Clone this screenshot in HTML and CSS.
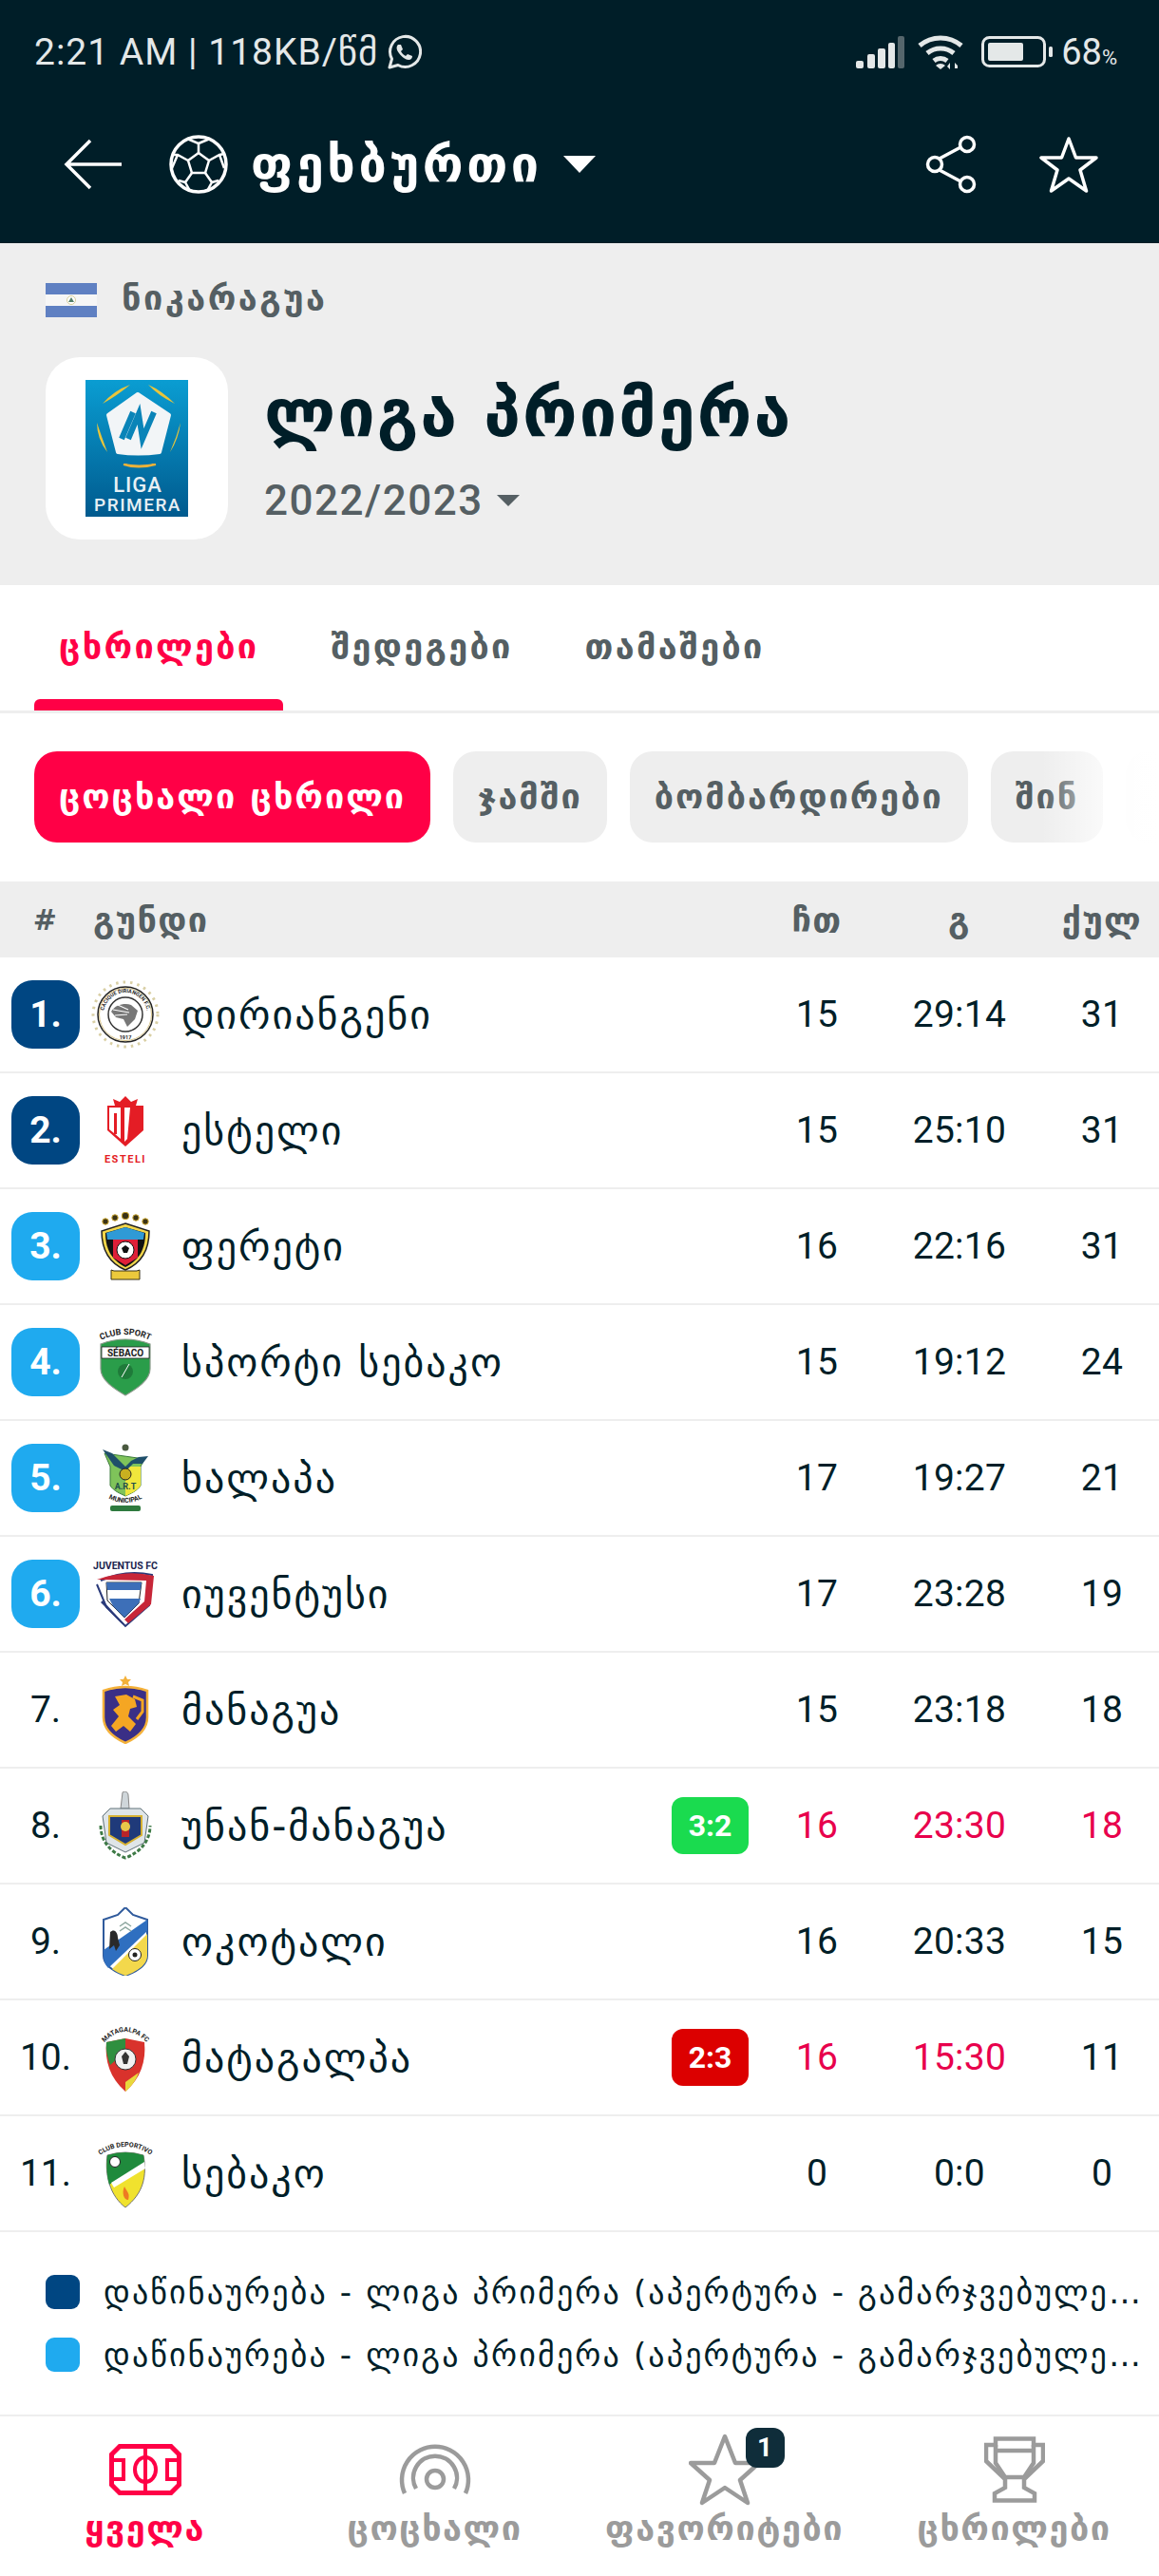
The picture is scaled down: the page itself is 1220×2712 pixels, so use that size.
FILE: index.html
```html
<!DOCTYPE html>
<html lang="ka">
<head>
<meta charset="utf-8">
<title>ლიგა პრიმერა</title>
<link rel="stylesheet" href="styles.css">
</head>
<body>
<div class="page">
  <header class="top">
    <div class="status">
      <div class="status-left">
        <span>2:21 AM | 118KB/წმ</span>
        <svg class="wa" viewBox="0 0 38 38" width="38" height="38"><path d="M4 35l2.500-9A16 16 0 1 1 13 32.500z" fill="none" stroke="#e4e8e8" stroke-width="3" stroke-linejoin="round"/><path d="M13 11c-2 2-2 5 1 9s7 7 10 7c3 0 4-2 4-4l-5-2-2 2c-2-1-4-3-5-5l2-2-2-5z" fill="#e4e8e8"/></svg>
      </div>
      <div class="status-right">
        <svg class="sig" viewBox="0 0 52 36" width="52" height="36"><rect x="0" y="27" width="8" height="8" rx="2" fill="#e4e8e8"/><rect x="12" y="20" width="8" height="15" rx="2" fill="#e4e8e8"/><rect x="23" y="14" width="8" height="21" rx="2" fill="#e4e8e8"/><rect x="34" y="8" width="7" height="27" rx="2" fill="#e4e8e8"/><rect x="44" y="1" width="7" height="34" rx="2" fill="#55666c"/></svg>
        <svg class="wifi" viewBox="0 0 54 40" width="54" height="40"><path d="M3 13a34 34 0 0 1 44 0M11 21a22 22 0 0 1 28 0M18 29a11 11 0 0 1 14 0" fill="none" stroke="#e4e8e8" stroke-width="5"/><path d="M25 38l-5-4a7 7 0 0 1 10 0z" fill="#e4e8e8"/><path d="M35 38v-7l-3 4zM40 40v-9l3 3v3h-3z" fill="#e4e8e8"/></svg>
        <svg class="batt" viewBox="0 0 76 34" width="76" height="34"><rect x="1.500" y="1.500" width="65" height="30" rx="7" fill="none" stroke="#e4e8e8" stroke-width="3"/><rect x="7" y="7" width="37" height="19" rx="2" fill="#e4e8e8"/><rect x="71" y="11" width="4" height="11" rx="1.500" fill="#e4e8e8"/></svg>
        <span class="pct">68<small>%</small></span>
      </div>
    </div>
    <div class="appbar">
      <svg class="back" viewBox="0 0 64 56" width="64" height="56"><path d="M62 28H4M29 3L4 28l25 25" fill="none" stroke="#fff" stroke-width="3.500"/></svg>
      <svg class="ball" viewBox="0 0 62 62" width="62" height="62"><circle cx="31" cy="31" r="29" fill="none" stroke="#fff" stroke-width="3.500"/><path d="M31 19l11 8-4 13H24l-4-13z" fill="none" stroke="#fff" stroke-width="2.500"/><path d="M31 19V9L19 4M31 9l12-5M42 27l11-6 5-1M53 21l5 14M38 40l7 10 7-2M45 50l-5 9M24 40l-7 10-7-2M17 50l5 9M20 27l-11-6-5 0M9 21L3 35" fill="none" stroke="#fff" stroke-width="2.500"/></svg>
      <span class="sport">ფეხბურთი</span>
      <span class="tri"></span>
      <svg class="share" viewBox="0 0 56 62" width="56" height="62"><path d="M13 26L41 11M13 36l28 15" stroke="#fff" stroke-width="3.500"/><circle cx="10" cy="31" r="7.500" fill="#001e28" stroke="#fff" stroke-width="3.500"/><circle cx="44" cy="10" r="7.500" fill="#001e28" stroke="#fff" stroke-width="3.500"/><circle cx="44" cy="52" r="7.500" fill="#001e28" stroke="#fff" stroke-width="3.500"/></svg>
      <svg class="fav" viewBox="0 0 62 62" width="62" height="62"><path d="M31 4l7.500 20H60L43 37l6.500 22L31 46 12.500 59 19 37 2 24h21.500z" fill="none" stroke="#fff" stroke-width="3.500" stroke-linejoin="round"/></svg>
    </div>
  </header>

  <section class="league">
    <div class="country">
      <svg class="flag" viewBox="0 0 54 36" width="54" height="36"><rect width="54" height="36" fill="#5f80c2"/><rect y="12" width="54" height="12" fill="#f6f6f6"/><circle cx="27" cy="18" r="4.500" fill="#fff" stroke="#d8cf9c"/><path d="M27 15l3 5h-6z" fill="#55806a"/></svg>
      <span class="country-name">ნიკარაგუა</span>
    </div>
    <div class="league-main">
      <div class="logo-card">
        <svg class="liga" viewBox="0 0 108 144" width="108" height="144">
          <defs><linearGradient id="lg" x1="0" y1="0" x2="0" y2="1"><stop offset="0" stop-color="#0a9dd2"/><stop offset="1" stop-color="#005a8e"/></linearGradient></defs>
          <rect width="108" height="144" fill="url(#lg)"/>
          <path d="M18 25Q30 11 47 5Q34 16 18 25zM94 25Q80 11 66 5Q76 16 94 25zM12 45Q12 62 23 76Q17 60 12 45zM100 45Q98 62 89 76Q96 60 100 45z" fill="#e9c53a"/>
          <path d="M55 15L88 37 78 76Q55 79 34 76L24 37z" fill="#f2f5f7" stroke="#f2f5f7" stroke-width="4" stroke-linejoin="round"/>
          <path d="M38 62L50 34M45 62L56 36L60 62L72 34" fill="none" stroke="#0a84b8" stroke-width="6"/>
          <path d="M40 89Q55 94 74 89Q56 92 40 89z" fill="#eab13a" stroke="#eab13a" stroke-width="2"/>
          <text x="55" y="118" class="liga-t">LIGA</text>
          <text x="55" y="138" class="liga-t liga-s">PRIMERA</text>
        </svg>
      </div>
      <div class="league-text">
        <h1 class="league-name">ლიგა პრიმერა</h1>
        <div class="season"><span>2022/2023</span><span class="tri small"></span></div>
      </div>
    </div>
  </section>

  <nav class="tabs">
    <a class="tab active">ცხრილები</a>
    <a class="tab">შედეგები</a>
    <a class="tab">თამაშები</a>
  </nav>

  <div class="pills">
    <span class="pill on">ცოცხალი ცხრილი</span>
    <span class="pill">ჯამში</span>
    <span class="pill">ბომბარდირები</span>
    <span class="pill">შინ</span>
    <span class="pill ghost"></span>
    <div class="fade"></div>
  </div>

  <div class="grid head">
    <span class="rk">#</span><span class="team-h">გუნდი</span><span class="c">ჩთ</span><span class="c">გ</span><span class="c">ქულ</span>
  </div>

  <div class="grid row">
    <span class="rk b1">1.</span>
    <svg class="crest" viewBox="0 0 72 72"><circle cx="36" cy="36" r="34" fill="none" stroke="#d9cfa4" stroke-width="3" stroke-dasharray="2.500 5"/><circle cx="36" cy="36" r="29" fill="#fff" stroke="#222" stroke-width="1.500"/><circle cx="36" cy="36" r="27.500" fill="none" stroke="#c9b16a" stroke-width=".8"/><circle cx="36" cy="36" r="18" fill="#fff" stroke="#333" stroke-width="1.500"/><path id="a1" d="M13 36a23 23 0 0 1 46 0" fill="none"/><text class="cr-t ring"><textPath href="#a1" startOffset="50%">CACIQUE DIRIANGEN F.C.</textPath></text><text x="36" y="62" class="cr-t ring">1917</text><path d="M21 33c5-8 15-9 21-7l7 6-3 9-8 8-4-8-8-2-5-6z" fill="#777"/><path d="M23 31l17 3M25 37l13-1M28 26l11 5" stroke="#fff" stroke-width="1.200"/></svg>
    <span class="name">დირიანგენი</span><span></span>
    <span class="c">15</span><span class="c">29:14</span><span class="c">31</span>
  </div>
  <div class="grid row">
    <span class="rk b1">2.</span>
    <svg class="crest" viewBox="0 0 72 72"><path d="M25 10l-2-7 7 3 6-6 6 6 7-3-2 7z" fill="#e41d25"/><path d="M17 10h38v26L36 53 17 36z" fill="#e41d25"/><path d="M19 12h12v33l-7-6-5-4zM35 12h6l-3 33-3 3z" fill="#fff"/><path d="M24 18h3v22h-3z" fill="#e41d25"/><text x="36" y="70" class="estl">ESTELI</text></svg>
    <span class="name">ესტელი</span><span></span>
    <span class="c">15</span><span class="c">25:10</span><span class="c">31</span>
  </div>
  <div class="grid row">
    <span class="rk b2">3.</span>
    <svg class="crest" viewBox="0 0 72 72"><g fill="#3a3317" stroke="#d0a92c"><circle cx="15" cy="10" r="3.200"/><circle cx="25" cy="6" r="3.200"/><circle cx="36" cy="4" r="3.800"/><circle cx="47" cy="6" r="3.200"/><circle cx="57" cy="10" r="3.200"/></g><path d="M36 12l25 8c0 17-6 33-25 41C17 53 11 37 11 20z" fill="#f2d64b" stroke="#222" stroke-width="1.500"/><path d="M36 16l21 6c0 15-5 28-21 36C20 50 15 37 15 22z" fill="#121212"/><path d="M16 22l20-6 20 6-1 7H17z" fill="#2f9ad6"/><path d="M23 29h26v19l-13 8-13-8z" fill="#df1f38"/><circle cx="36" cy="40" r="9" fill="#fff" stroke="#111"/><path d="M36 35l4 3-2 5h-4l-2-5z" fill="#111"/><path d="M24 62h24l3-1v10H21V61z" fill="#ecc93c" stroke="#3a3317"/></svg>
    <span class="name">ფერეტი</span><span></span>
    <span class="c">16</span><span class="c">22:16</span><span class="c">31</span>
  </div>
  <div class="grid row">
    <span class="rk b2">4.</span>
    <svg class="crest" viewBox="0 0 72 72"><path id="a4" d="M6 15Q36-1 66 15" fill="none"/><text class="cr-t"><textPath href="#a4" startOffset="50%">CLUB SPORT</textPath></text><path d="M10 17Q36 7 62 17v26c0 12-14 21-26 28C24 64 10 55 10 43z" fill="#2a9d4a" stroke="#8a9a8a" stroke-width="1.200"/><rect x="11" y="20" width="50" height="12" fill="#fff" stroke="#222" stroke-width=".8"/><text x="36" y="30" class="seb">SÉBACO</text><circle cx="36" cy="46" r="8" fill="#1f7a3a"/><path d="M32 52l8-14" stroke="#fff"/></svg>
    <span class="name">სპორტი სებაკო</span><span></span>
    <span class="c">15</span><span class="c">19:12</span><span class="c">24</span>
  </div>
  <div class="grid row">
    <span class="rk b2">5.</span>
    <svg class="crest" viewBox="0 0 72 72"><circle cx="36" cy="4" r="3.500" fill="#4a5a40"/><path d="M14 10l6 14v20c4 6 10 8 16 11 6-3 12-5 16-11V24l4-8z" fill="#7fc35a" stroke="#3b7a3a"/><path d="M36 24h16v20c-4 6-10 8-16 11z" fill="#f0e63c"/><path d="M12 6l10 4 14 14 6-6 8-4 10-1-6 8H44l-8 8-12-6z" fill="#1f4f6a"/><circle cx="36" cy="32" r="6" fill="#c8b020" stroke="#222"/><text x="36" y="48" class="art">A.R.T</text><path id="a5" d="M10 52Q36 72 62 52" fill="none"/><text class="cr-t tiny"><textPath href="#a5" startOffset="50%">MUNICIPAL</textPath></text><rect x="20" y="65" width="32" height="6" rx="2" fill="#2e7a3e"/></svg>
    <span class="name">ხალაპა</span><span></span>
    <span class="c">17</span><span class="c">19:27</span><span class="c">21</span>
  </div>
  <div class="grid row">
    <span class="rk b2">6.</span>
    <svg class="crest" viewBox="0 0 72 72"><text x="36" y="10" class="juv">JUVENTUS FC</text><path d="M10 22Q36 10 64 16l-3 32-25 22L16 50 6 26" fill="none" stroke="#2a3a7a" stroke-width="2"/><path d="M6 21Q36 10 66 17l-3 30-24 20-4-4 21-19 2-22z" fill="#c72638"/><path d="M12 43l24 26-4-2-22-22z" fill="#2a3a7a"/><path d="M16 24h37l-3 22-15 15-18-18z" fill="#fff" stroke="#222"/><path d="M16 24h37l-1 8H17z" fill="#3d6fb8"/><path d="M19 41h33l-2 5-15 15-12-12z" fill="#3d6fb8"/></svg>
    <span class="name">იუვენტუსი</span><span></span>
    <span class="c">17</span><span class="c">23:28</span><span class="c">19</span>
  </div>
  <div class="grid row">
    <span class="rk">7.</span>
    <svg class="crest" viewBox="0 0 72 72"><path d="M36 0l2 4h4l-3 3 1 4-4-2-4 2 1-4-3-3h4z" fill="#f4b13a"/><path d="M13 16Q36 8 59 16v28c0 14-12 22-23 27-11-5-23-13-23-27z" fill="#3a2f86" stroke="#f4b13a" stroke-width="2.500"/><path d="M25 22l12-2 9 5 2 8-7 2-2 8 8 8-6 8-7-6-8 6-5-6 8-10-6-7 7-5z" fill="#f5a623"/><path d="M44 22l10 4v12l-6 8" fill="none" stroke="#f5a623" stroke-width="3"/></svg>
    <span class="name">მანაგუა</span><span></span>
    <span class="c">15</span><span class="c">23:18</span><span class="c">18</span>
  </div>
  <div class="grid row">
    <span class="rk">8.</span>
    <svg class="crest" viewBox="0 0 72 72"><path d="M33 1c3-2 6 0 6 3l1 14H31z" fill="#cfd6da" stroke="#888"/><path d="M12 26l8-8h32l8 8-4 28-20 10-20-10z" fill="#dfe5e8" stroke="#5f7078"/><path d="M19 26h34v20l-17 10-17-10z" fill="#1f3a7a" stroke="#d6b132" stroke-width="2"/><path d="M32 30h8v18h-8z" fill="#b8242a"/><circle cx="36" cy="37" r="5" fill="#e7c84a"/><path d="M10 36c0 16 10 28 26 34 16-6 26-18 26-34" fill="none" stroke="#3e7a46" stroke-width="3" stroke-dasharray="4 2"/></svg>
    <span class="name">უნან-მანაგუა</span><span class="score win">3:2</span>
    <span class="c red">16</span><span class="c red">23:30</span><span class="c red">18</span>
  </div>
  <div class="grid row">
    <span class="rk">9.</span>
    <svg class="crest" viewBox="0 0 72 72"><path d="M36 0l8 8 15 5v38c0 10-12 17-23 21-11-4-23-11-23-21V13l15-5z" fill="#fff" stroke="#2f5a9c" stroke-width="2"/><path d="M59 13v12L18 64c-3-3-5-8-5-13v-6z" fill="#2f6fc0"/><path d="M59 28v23c0 10-12 17-23 21-5-2-10-4-14-7z" fill="#f3d84c"/><path d="M20 26c4-4 8 0 8 6l2 8-4 6-2-6-5 4z" fill="#2a2a2a"/><circle cx="46" cy="50" r="6.500" fill="#fff" stroke="#222"/><circle cx="46" cy="50" r="2.500" fill="#222"/><path d="M30 20l6-4 6 4M30 25l6-4 6 4" fill="none" stroke="#8fa8a0" stroke-width="1.500"/></svg>
    <span class="name">ოკოტალი</span><span></span>
    <span class="c">16</span><span class="c">20:33</span><span class="c">15</span>
  </div>
  <div class="grid row">
    <span class="rk">10.</span>
    <svg class="crest" viewBox="0 0 72 72"><path id="a10" d="M14 20Q36 -2 58 20" fill="none"/><text class="cr-t tiny"><textPath href="#a10" startOffset="50%">MATAGALPA FC</textPath></text><path d="M16 20l20-4 20 4c2 20-4 38-20 52C20 58 14 40 16 20z" fill="#d9322c"/><path d="M16 20l20-4v14L20 44c-3-8-5-16-4-24z" fill="#2f8f3f"/><path d="M36 62l14-10c-3 8-7 14-14 20z" fill="#e8d83c"/><circle cx="36" cy="38" r="11" fill="#f2f2f2" stroke="#333"/><path d="M36 30l4 5-2 8h-4l-2-8z" fill="#333"/></svg>
    <span class="name">მატაგალპა</span><span class="score loss">2:3</span>
    <span class="c red">16</span><span class="c red">15:30</span><span class="c">11</span>
  </div>
  <div class="grid row">
    <span class="rk">11.</span>
    <svg class="crest" viewBox="0 0 72 72"><path id="a11" d="M0 24Q36 -8 72 24" fill="none"/><text class="cr-t tiny"><textPath href="#a11" startOffset="50%">CLUB DEPORTIVO</textPath></text><path d="M17 17q19-6 38 0c4 22 0 40-19 55C20 60 14 38 17 17z" fill="#f0e22e" stroke="#556" stroke-width=".8"/><path d="M17 17q19-6 38 0l1 8-37 23c-3-10-3-21-2-31z" fill="#1f8a3c"/><path d="M21 46L56 24l1 7-33 20z" fill="#fff"/><circle cx="25" cy="24" r="5.500" fill="#fff" stroke="#222"/><path d="M35 50c3 6 6 7 4 14-5 0-7-8-4-14z" fill="#ee7a22"/></svg>
    <span class="name">სებაკო</span><span></span>
    <span class="c">0</span><span class="c">0:0</span><span class="c">0</span>
  </div>

  <div class="legend">
    <div class="leg"><i class="dot d1"></i><span>დაწინაურება - ლიგა პრიმერა (აპერტურა - გამარჯვებულები)</span></div>
    <div class="leg"><i class="dot d2"></i><span>დაწინაურება - ლიგა პრიმერა (აპერტურა - გამარჯვებულები)</span></div>
  </div>

  <footer class="bottom">
    <div class="nav active">
      <span class="ic-wrap">
        <svg viewBox="0 0 76 54" width="76" height="54"><g fill="none" stroke="#ff0046"><path d="M11 2.500H65L73.500 11V43L65 51.500H11L2.500 43V11z" stroke-width="5"/><path d="M38 3v48" stroke-width="4"/><ellipse cx="38" cy="27" rx="11" ry="13" stroke-width="4"/><path d="M3 17H15V37H3M73 17H61V37H73" stroke-width="4"/></g></svg>
      </span>
      <span>ყველა</span>
    </div>
    <div class="nav">
      <span class="ic-wrap">
        <svg viewBox="0 0 76 54" width="76" height="54"><g fill="none" stroke="#9b9b9b" stroke-width="4.500"><path d="M6 52A35 35 0 1 1 70 52"/><path d="M18 47A23 23 0 1 1 58 47"/><circle cx="38" cy="37" r="9"/></g></svg>
      </span>
      <span>ცოცხალი</span>
    </div>
    <div class="nav">
      <span class="ic-wrap">
        <svg viewBox="0 0 76 76" width="76" height="76"><path d="M38 3L49 31H74L54 49L62 73L38 57L14 73L22 49L2 31H27z" fill="none" stroke="#9b9b9b" stroke-width="4.500" stroke-linejoin="round"/></svg>
        <b class="badge">1</b>
      </span>
      <span>ფავორიტები</span>
    </div>
    <div class="nav">
      <span class="ic-wrap">
        <svg viewBox="0 0 64 70" width="64" height="70"><g fill="none" stroke="#9b9b9b" stroke-width="4.500"><path d="M12 2.500H52V9H62V26L42 45V54L53 60V67.500H11V60L22 54V45L2 26V9H12Z"/><path d="M12 9V28L22 43M52 9V28L42 43M12 15H52M22 43H42"/></g></svg>
      </span>
      <span>ცხრილები</span>
    </div>
  </footer>
</div>
</body>
</html>
```
FILE: styles.css
```css
* { box-sizing: border-box; }
html, body { margin: 0; padding: 0; background: #fff; }
body { font-family: Roboto, "DejaVu Sans", sans-serif; color: #001e28; }
.page { width: 1220px; height: 2712px; display: flex; flex-direction: column; overflow: hidden; }

.top { background: #001e28; height: 256px; flex: none; }
.status { height: 110px; padding: 0 44px 0 36px; display: flex; justify-content: space-between; align-items: center; color: #e4e8e8; font-size: 39px; }
.status-left { display: flex; align-items: center; gap: 8px; letter-spacing: 1px; }
.status-right { display: flex; align-items: center; }
.sig { margin-right: 12px; }
.wifi { margin-right: 14px; }
.batt { margin-right: 8px; }
.pct { font-size: 38px; }
.pct small { font-size: 22px; }

.appbar { height: 146px; padding: 0 64px 20px 66px; display: flex; align-items: center; }
.back { margin-right: 48px; }
.ball { margin-right: 24px; }
.sport { color: #fff; font: 700 52px "DejaVu Sans", sans-serif; letter-spacing: 3.600px; }
.tri { width: 0; height: 0; border-left: 17px solid transparent; border-right: 17px solid transparent; border-top: 18px solid #fff; margin-left: 22px; }
.share { margin-left: auto; margin-right: 64px; }

.league { background: #eee; height: 360px; padding: 42px 48px 0; display: flex; flex-direction: column; gap: 42px; flex: none; }
.country { display: flex; align-items: center; gap: 26px; height: 36px; }
.country-name { font: 700 36px "DejaVu Sans", sans-serif; letter-spacing: 2.500px; color: #555f63; text-transform: uppercase; padding-bottom: 5px; }
.league-main { display: flex; align-items: flex-start; gap: 38px; }
.logo-card { width: 192px; height: 192px; background: #fff; border-radius: 36px; display: flex; align-items: center; justify-content: center; }
.liga-t { fill: #e8f0f4; font: 500 22px Roboto, sans-serif; letter-spacing: 1px; text-anchor: middle; }
.liga-s { font-size: 19px; letter-spacing: 1.500px; }
.league-text { display: flex; flex-direction: column; padding-top: 19px; }
.league-name { margin: 0; font: 700 70px/80px "DejaVu Sans", sans-serif; letter-spacing: 2px; color: #001e28; white-space: nowrap; }
.season { margin-top: 26px; display: flex; align-items: center; gap: 14px; font: 500 44px/52px Roboto, sans-serif; color: #555f63; letter-spacing: 1.500px; }
.tri.small { border-left-width: 12px; border-right-width: 12px; border-top-width: 12px; border-top-color: #555f63; margin-left: 0; }

.tabs { height: 135px; padding: 0 36px; display: flex; border-bottom: 3px solid #eee; flex: none; }
.tab { height: 132px; padding: 0 26px 4px; display: flex; align-items: center; font: 700 36px "DejaVu Sans", sans-serif; letter-spacing: 2.300px; color: #555f63; text-transform: uppercase; }
.tab + .tab { margin-left: 24px; }
.tab.active { color: #ff0046; position: relative; }
.tab.active::after { content: ""; position: absolute; left: 0; right: 0; bottom: 0; height: 12px; background: #ff0046; border-radius: 6px 6px 0 0; }

.pills { height: 177px; padding: 40px 36px 41px; display: flex; gap: 24px; position: relative; overflow: hidden; flex: none; }
.pill { flex: none; height: 96px; padding: 0 26px 2px; border-radius: 24px; background: #eee; color: #555f63; display: flex; align-items: center; font: 700 36px "DejaVu Sans", sans-serif; letter-spacing: 1.950px; text-transform: uppercase; }
.pill.on { background: #ff0046; color: #fff; }
.pill.ghost { width: 120px; }
.fade { position: absolute; top: 0; bottom: 0; right: 0; width: 124px; background: linear-gradient(90deg, rgba(255,255,255,0), rgba(255,255,255,.96) 72%, #fff); }

.grid { display: grid; align-items: center; flex: none; }
.grid .c { text-align: center; }
.head { height: 80px; background: #eee; color: #555f63; grid-template-columns: 98px 702px 120px 15px 150px 15px 120px; font: 700 36px "DejaVu Sans", sans-serif; letter-spacing: 1.400px; }
.head .rk { font-size: 30px; text-align: center; width: 96px; }
.head .c:nth-child(3) { grid-column: 3; }
.head .c:nth-child(4) { grid-column: 5; }
.head .c:nth-child(5) { grid-column: 7; }
.row { height: 122px; border-bottom: 2px solid #eee; grid-template-columns: 96px 72px 23px 516px 81px 12px 120px 15px 150px 15px 120px; font-size: 39px; }
.row .c { letter-spacing: .3px; }
.row > .rk { grid-column: 1; justify-self: center; }
.row > .crest { grid-column: 2; }
.row > .name { grid-column: 4; }
.row > :nth-child(4) { grid-column: 5; }
.row > :nth-child(5) { grid-column: 7; }
.row > :nth-child(6) { grid-column: 9; }
.row > :nth-child(7) { grid-column: 11; }
.rk { text-align: center; }
.b1, .b2 { width: 72px; height: 72px; border-radius: 22px; color: #fff; font-weight: 700; display: flex; align-items: center; justify-content: center; }
.b1 { background: #004682; }
.b2 { background: #1faaef; }
.crest { width: 72px; height: 72px; display: block; }
.name { font-family: "DejaVu Sans", sans-serif; font-size: 42px; letter-spacing: 2px; white-space: nowrap; }
.red { color: #e8004c; }
.score { width: 81px; height: 60px; border-radius: 12px; color: #fff; font-size: 32px; font-weight: 700; display: flex; align-items: center; justify-content: center; }
.win { background: #1adb4f; }
.loss { background: #dc0000; }

.cr-t { font: 700 9px Roboto, sans-serif; text-anchor: middle; fill: #222; }
.cr-t.tiny { font-size: 7px; }
.cr-t.ring { font-size: 5.500px; }
.estl { font: 700 11px Roboto, sans-serif; letter-spacing: 1.500px; fill: #e41d25; text-anchor: middle; }
.seb { font: 700 10px Roboto, sans-serif; text-anchor: middle; fill: #222; }
.art { font: 700 9px Roboto, sans-serif; text-anchor: middle; fill: #1f4f4a; }
.juv { font: 700 10.500px Roboto, sans-serif; text-anchor: middle; fill: #1d2550; }

.legend { height: 194px; padding: 45px 8px 0 48px; display: flex; flex-direction: column; gap: 30px; border-bottom: 2px solid #eee; flex: none; }
.leg { display: flex; align-items: center; gap: 25px; height: 36px; font: 400 34px/44px "DejaVu Sans", sans-serif; letter-spacing: 2.150px; min-width: 0; }
.leg span { overflow: hidden; text-overflow: ellipsis; white-space: nowrap; min-width: 0; }
.dot { flex: none; width: 36px; height: 36px; border-radius: 9px; }
.d1 { background: #004682; }
.d2 { background: #1faaef; }

.bottom { flex: 1; display: flex; padding-top: 16px; }
.nav { flex: 1; display: flex; flex-direction: column; align-items: center; color: #9b9b9b; font: 700 36px/44px "DejaVu Sans", sans-serif; letter-spacing: 1.500px; white-space: nowrap; }
.nav.active { color: #ff0046; }
.ic-wrap { position: relative; display: flex; align-items: center; justify-content: center; height: 80px; }
.badge { position: absolute; top: -4px; left: 60px; width: 41px; height: 42px; border-radius: 12px; background: #0f2d3a; color: #fff; font: 700 28px/42px Roboto, sans-serif; letter-spacing: 0; text-align: center; }
```
